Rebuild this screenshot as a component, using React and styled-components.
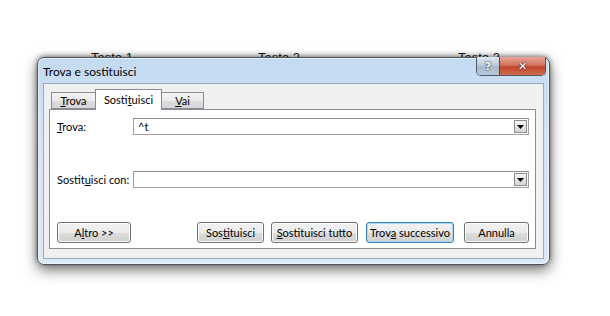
import React from "react";
import styled, { createGlobalStyle } from "styled-components";

const GlobalStyle = createGlobalStyle`
  body {
    margin: 0;
    background: #ffffff;
    font-family: Lato, "Noto Sans", sans-serif;
  }
`;

const Page = styled.div`
  position: relative;
  width: 610px;
  height: 316px;
  overflow: hidden;
  background: #ffffff;
`;

// testo del documento dietro la finestra
const DocRow = styled.div`
  display: flex;
  padding: 50px 0 0 91px;
  font-family: "Liberation Sans", Arial, sans-serif;
  font-size: 13px;
  color: #111;
`;

const DocCell = styled.span`
  width: ${({ w }) => w}px;
  flex: none;
`;

const Window = styled.div`
  position: absolute;
  left: 37px;
  top: 57px;
  width: 513px;
  height: 208px;
  box-sizing: border-box;
  display: flex;
  flex-direction: column;
  border: 1px solid #4b5560;
  border-radius: 7px;
  background: linear-gradient(180deg, #c4daf1 0%, #d3e4f5 40%, #dbe8f6 100%);
  box-shadow: 0 5px 14px rgba(0, 0, 0, 0.55), 0 -1px 5px rgba(0, 0, 0, 0.45),
    inset 0 0 0 1px rgba(255, 255, 255, 0.6);
  padding: 0 5px 5px 5px;
`;

const TitleBar = styled.div`
  display: flex;
  align-items: flex-start;
  justify-content: space-between;
  height: 25px;
  flex: none;
`;

const TitleText = styled.span`
  font-size: 12px;
  color: #000;
  margin-top: 6px;
  white-space: nowrap;
`;

const CaptionGroup = styled.div`
  display: flex;
  margin-right: -2px;
  margin-top: -1px;
  border: 1px solid #4f5966;
  border-top: none;
  border-radius: 0 0 5px 5px;
  overflow: hidden;
  height: 18px;
`;

const CaptionButton = styled.div`
  width: ${({ w }) => w}px;
  height: 18px;
  display: flex;
  align-items: center;
  justify-content: center;
  font-family: "DejaVu Sans", sans-serif;
  font-weight: bold;
  font-size: 11px;
  color: #fff;
  background: ${({ close }) =>
    close
      ? "linear-gradient(180deg, #e8a496 0%, #d4735e 45%, #c0442c 55%, #d06c4e 100%)"
      : "linear-gradient(180deg, #dfe7f0 0%, #bccbdc 45%, #a5b7cc 55%, #b9cadd 100%)"};
  border-left: ${({ close }) => (close ? "1px solid #6e3a34" : "none")};
  text-shadow: 0 0 1px #2a3440, 0 0 2px #2a3440;
`;

const Client = styled.div`
  flex: 1;
  display: flex;
  flex-direction: column;
  background: #f0f0f0;
  border: 1px solid #9aabbd;
  padding: 5px 7px 9px 5px;
  min-height: 0;
`;

const TabStrip = styled.div`
  display: flex;
  align-items: flex-end;
  height: 20px;
  padding-left: 2px;
  position: relative;
  z-index: 1;
`;

const Tab = styled.div`
  box-sizing: border-box;
  width: ${({ w }) => w}px;
  height: ${({ active }) => (active ? 21 : 17)}px;
  margin-bottom: ${({ active }) => (active ? -1 : 0)}px;
  display: flex;
  align-items: center;
  justify-content: center;
  font-size: 11px;
  color: #000;
  white-space: nowrap;
  border: 1px solid #898c95;
  border-bottom: ${({ active }) => (active ? "none" : "1px solid #898c95")};
  margin-left: ${({ active }) => (active ? -1 : 0)}px;
  margin-right: ${({ active }) => (active ? -1 : 0)}px;
  background: ${({ active }) =>
    active ? "#ffffff" : "linear-gradient(180deg, #f3f3f3 0%, #ebebeb 50%, #dddddd 51%, #d6d6d6 100%)"};
  padding-bottom: ${({ active }) => (active ? 2 : 0)}px;
`;

const Panel = styled.div`
  flex: 1;
  display: flex;
  flex-direction: column;
  background: #ffffff;
  border: 1px solid #898c95;
  padding: 8px 6px 5px 7px;
`;

const FieldRow = styled.div`
  display: grid;
  grid-template-columns: 76px 1fr;
  align-items: center;
  margin-bottom: ${({ gap }) => gap}px;
`;

const Label = styled.span`
  font-size: 11px;
  color: #000;
  white-space: nowrap;
`;

const Combo = styled.div`
  box-sizing: border-box;
  height: 17px;
  display: flex;
  align-items: center;
  border: 1px solid #a0a0a0;
  border-top-color: #8d8d8d;
  background: #fff;
  padding-left: 4px;
  font-size: 11px;
`;

const ComboText = styled.span`
  flex: 1;
`;

const DropButton = styled.div`
  width: 13px;
  height: 13px;
  margin-right: 1px;
  box-sizing: border-box;
  border: 1px solid #8e8e8e;
  background: linear-gradient(180deg, #f4f4f4, #d4d4d4);
  display: flex;
  align-items: center;
  justify-content: center;
`;

const ButtonRow = styled.div`
  display: flex;
  align-items: center;
  margin-top: auto;
`;

const Button = styled.div`
  box-sizing: border-box;
  width: ${({ w }) => w}px;
  height: 21px;
  margin-left: ${({ ml }) => ml || 0}px;
  display: flex;
  align-items: center;
  justify-content: center;
  font-size: 11px;
  color: #000;
  white-space: nowrap;
  border: 1px solid ${({ focus }) => (focus ? "#3c7fb1" : "#707070")};
  border-radius: 3px;
  background: linear-gradient(180deg, #f2f2f2 0%, #ebebeb 50%, #dddddd 51%, #cfcfcf 100%);
  box-shadow: inset 0 0 0 1px ${({ focus }) => (focus ? "#a6d8f7" : "#fcfcfc")};
`;

const Spacer = styled.div`
  flex: 1;
`;

const Key = styled.u`
  text-decoration-thickness: 1px;
  text-underline-offset: 1px;
`;

const DropArrow = () => (
  <svg width="7" height="4" viewBox="0 0 7 4">
    <path d="M0 0h7L3.5 4z" fill="#000" />
  </svg>
);

export default function App() {
  return (
    <>
      <GlobalStyle />
      <Page>
        <DocRow>
          <DocCell w={167}>Testo 1</DocCell>
          <DocCell w={200}>Testo 2</DocCell>
          <DocCell w={60}>Testo 3</DocCell>
        </DocRow>

        <Window>
          <TitleBar>
            <TitleText>Trova e sostituisci</TitleText>
            <CaptionGroup>
              <CaptionButton w={22}>?</CaptionButton>
              <CaptionButton w={45} close>
                ✕
              </CaptionButton>
            </CaptionGroup>
          </TitleBar>

          <Client>
            <TabStrip>
              <Tab w={45}>
                <span>
                  <Key>T</Key>rova
                </span>
              </Tab>
              <Tab w={67} active>
                <span>
                  Sosti<Key>t</Key>uisci
                </span>
              </Tab>
              <Tab w={43}>
                <span>
                  <Key>V</Key>ai
                </span>
              </Tab>
            </TabStrip>

            <Panel>
              <FieldRow gap={36}>
                <Label>
                  <Key>T</Key>rova:
                </Label>
                <Combo>
                  <ComboText>^t</ComboText>
                  <DropButton>
                    <DropArrow />
                  </DropButton>
                </Combo>
              </FieldRow>

              <FieldRow gap={0}>
                <Label>
                  Sostit<Key>u</Key>isci con:
                </Label>
                <Combo>
                  <ComboText />
                  <DropButton>
                    <DropArrow />
                  </DropButton>
                </Combo>
              </FieldRow>

              <ButtonRow>
                <Button w={74}>
                  <span>
                    A<Key>l</Key>tro &gt;&gt;
                  </span>
                </Button>
                <Spacer />
                <Button w={67}>
                  <span>
                    Sos<Key>t</Key>ituisci
                  </span>
                </Button>
                <Button w={87} ml={7}>
                  <span>
                    <Key>S</Key>ostituisci tutto
                  </span>
                </Button>
                <Button w={88} ml={8} focus>
                  <span>
                    Trov<Key>a</Key> successivo
                  </span>
                </Button>
                <Button w={65} ml={10}>
                  <span>Annulla</span>
                </Button>
              </ButtonRow>
            </Panel>
          </Client>
        </Window>
      </Page>
    </>
  );
}
